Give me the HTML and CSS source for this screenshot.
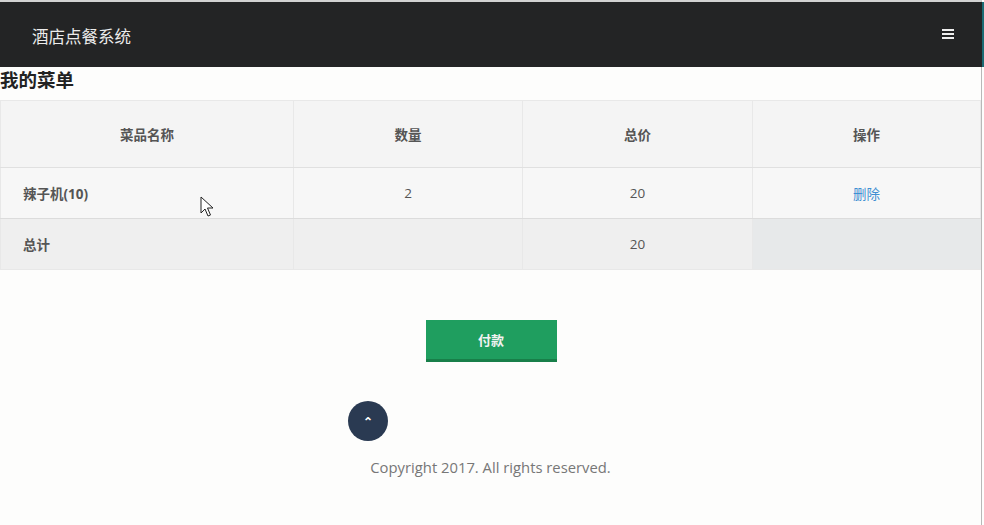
FILE: index.html
```html
<!DOCTYPE html>
<html>
<head>
<meta charset="utf-8">
<title>我的菜单</title>
<link rel="stylesheet" href="styles.css">
</head>
<body>
<div class="page">
  <div class="navbar">
    <span class="brand">酒店点餐系统</span>
    <span class="menu-toggle"><i></i><i></i><i></i></span>
  </div>

  <h3 class="title">我的菜单</h3>

  <table class="order-table">
    <thead>
      <tr>
        <th class="col-name">菜品名称</th>
        <th class="col-num">数量</th>
        <th class="col-price">总价</th>
        <th>操作</th>
      </tr>
    </thead>
    <tbody>
      <tr class="item-row">
        <td class="dish">辣子机(10)</td>
        <td>2</td>
        <td>20</td>
        <td><a href="#" class="del">删除</a></td>
      </tr>
      <tr class="total-row">
        <td class="dish">总计</td>
        <td></td>
        <td>20</td>
        <td class="blank"></td>
      </tr>
    </tbody>
  </table>

  <div class="pay-wrap">
    <button class="pay-btn">付款</button>
  </div>

  <div class="footer">
    <a href="#" class="to-top">&#8963;</a>
    <p class="copyright">Copyright 2017. All rights reserved.</p>
  </div>

  <svg class="cursor" width="14" height="22" viewBox="0 0 14 22">
    <path d="M1 1 L1 17 L5 13 L8 20 L10.5 19 L7.5 12 L13 12 Z" fill="#fff" stroke="#222" stroke-width="1"/>
  </svg>
</div>
</body>
</html>
```

FILE: styles.css
```css
html, body {
  margin: 0;
  background: #fdfdfc;
}

body {
  font-family: "Open Sans", "Noto Sans CJK SC", sans-serif;
  color: #555;
  font-size: 13px;
}

.page {
  position: relative;
  width: 982px;
  min-height: 525px;
  border-top: 2px solid #d2d2d2;
  border-right: 1px solid #b8b8b8;
  box-sizing: border-box;
}

.navbar {
  height: 65px;
  background: #232425;
  display: flex;
  align-items: center;
  justify-content: space-between;
  padding: 0 28px 0 32px;
  margin-right: -3px;
  border-right: 2px solid #1b6b74;
}

.brand {
  color: #ececec;
  font-size: 16.5px;
  font-family: "Noto Sans CJK SC", sans-serif;
  margin-top: 2px;
}

.menu-toggle {
  display: flex;
  flex-direction: column;
  gap: 2px;
  margin-top: -2px;
}

.menu-toggle i {
  display: block;
  width: 12px;
  height: 2px;
  background: #eee;
}

.title {
  margin: 0;
  font-size: 18.5px;
  line-height: 24px;
  color: #222;
  font-weight: bold;
  font-family: "Noto Sans CJK SC", sans-serif;
}

.order-table {
  margin-top: 9px;
  width: 981px;
  border-collapse: collapse;
  border: 1px solid #d6d6d6;
  font-size: 13.5px;
}

.order-table th,
.order-table td {
  border: 1px solid #e8e8e8;
  text-align: center;
  padding: 0;
}

.order-table th {
  height: 66px;
  background: #f4f4f4;
  font-weight: bold;
  color: #555;
  border-bottom-color: #e0e0e0;
}

.col-name { width: 292px; }
.col-num { width: 228px; }
.col-price { width: 229px; }

.order-table td {
  height: 50px;
}

.item-row td {
  background: #f7f7f7;
  border-bottom-color: #dcdcdc;
}

.total-row td {
  background: #efefef;
}

.total-row td.blank {
  background: #e7e9ea;
}

.order-table td.dish {
  text-align: left;
  padding-left: 22px;
  font-weight: bold;
}

.del {
  color: #3f8fd2;
  text-decoration: none;
}

.pay-wrap {
  margin-top: 50px;
  text-align: center;
}

.pay-btn {
  width: 131px;
  height: 42px;
  border: 0;
  border-bottom: 3px solid #187f49;
  background: #1f9e5f;
  color: #f2f2f2;
  font-weight: bold;
  font-size: 13px;
  font-family: "Noto Sans CJK SC", sans-serif;
  padding: 0;
  margin-left: 1px;
}

.footer {
  margin-top: 39px;
}

.to-top {
  display: flex;
  align-items: center;
  justify-content: center;
  width: 40px;
  height: 40px;
  margin-left: 348px;
  border-radius: 50%;
  background: #2a3a52;
  color: #fff;
  font-size: 12px;
  font-weight: bold;
  text-decoration: none;
}

.copyright {
  margin: 16px 0 0;
  text-align: center;
  font-size: 14.8px;
  color: #777;
}

.cursor {
  position: absolute;
  left: 200px;
  top: 194px;
}
```
